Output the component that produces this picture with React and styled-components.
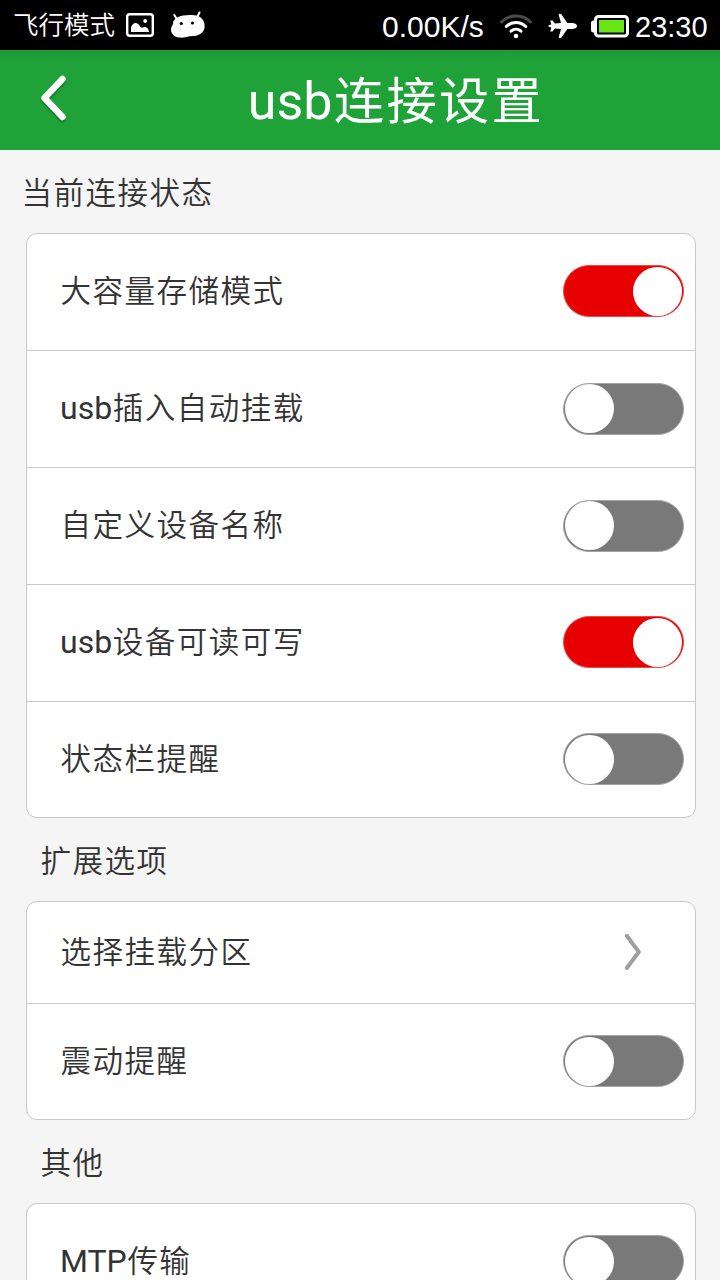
import React, { useState } from "react";
import styled, { createGlobalStyle } from "styled-components";

const sections = [
  {
    title: "当前连接状态",
    indent: 21,
    rows: [
      { id: "storage", label: "大容量存储模式", on: true },
      { id: "automount", label: "usb插入自动挂载" },
      { id: "name", label: "自定义设备名称" },
      { id: "writable", label: "usb设备可读可写", on: true },
      { id: "statusbar", label: "状态栏提醒" },
    ],
  },
  {
    title: "扩展选项",
    indent: 40,
    rows: [
      { id: "partition", label: "选择挂载分区", link: true },
      { id: "vibrate", label: "震动提醒" },
    ],
  },
  {
    title: "其他",
    indent: 40,
    rows: [{ id: "mtp", label: "MTP传输" }],
  },
];

const PictureIcon = () => (
  <PictureSvg viewBox="0 0 28 24">
    <rect x="1.2" y="1.2" width="25.6" height="21.6" rx="2.6" fill="none" stroke="#fff" strokeWidth="2.4" />
    <path d="M5 19v-5c1.500-2.500 2.500-4 4.500-4 2 0 3.500 1.500 5 4 1.500 1.500 3 0 4.500 0 2 0 4 2.500 4 5z" fill="#fff" />
    <circle cx="19.200" cy="8" r="2" fill="#fff" />
  </PictureSvg>
);

const DroidIcon = () => (
  <DroidSvg viewBox="0 0 36 28">
    <path d="M4.300 4l3 5M29.500 1.500l-2.500 5" stroke="#fff" strokeWidth="2" strokeLinecap="round" />
    <path
      d="M3.500 10C5.500 7 9 5 13 4.500c5-.8 11-.8 15 .5 4.500 1.800 7 6 6.600 11-.4 5-4.600 8.500-10.600 9-2.500.2-4 0-6 .6-2.500 1-5 1.300-8.500 1C4 26.300.8 22.500 1 18c.2-2.500 1.500-3.500 2-5 .2-1 0-2 .5-3z"
      fill="#fff"
    />
    <circle cx="11.300" cy="12.500" r="1.600" fill="#000" />
    <circle cx="22.500" cy="12" r="1.600" fill="#000" />
  </DroidSvg>
);

const WifiIcon = () => (
  <WifiSvg viewBox="0 0 32 25" fill="none" strokeLinecap="round">
    <path d="M1.500 8C9 0 23 0 30.500 8" stroke="#4a4a4a" strokeWidth="3" />
    <path d="M6.300 12.500c5.500-5.300 13.900-5.300 19.400 0" stroke="#fff" strokeWidth="3" />
    <path d="M11 17.200c3-2.700 7-2.700 10 0" stroke="#fff" strokeWidth="3" />
    <circle cx="16" cy="22" r="2.300" fill="#fff" />
  </WifiSvg>
);

const PlaneIcon = () => (
  <PlaneSvg viewBox="0 0 30 26">
    <path
      d="M29 13c0 1.800-2.500 3-5.500 3h-4.200L13.500 24.500c-1 1.200-3 .8-2.700-.7L13 16l-6-.5L4.500 18.500H2.300l1-4L.6 13.700v-1.400l2.700-.8-1-4h2.200L7 10.500l6-.5-2.200-7.800c-.3-1.500 1.700-1.900 2.700-.7L19.300 10h4.200c3 0 5.500 1.200 5.500 3z"
      fill="#fff"
    />
  </PlaneSvg>
);

const BatteryIcon = () => (
  <BatterySvg viewBox="0 0 38 23">
    <rect x="0" y="5.500" width="6" height="12" rx="2.500" fill="#fff" />
    <rect x="4.500" y="1.500" width="32" height="19.500" rx="3" fill="#000" stroke="#fff" strokeWidth="3" />
    <rect x="8" y="5" width="25" height="12.500" fill="#68e614" />
  </BatterySvg>
);

// Han characters are set a little smaller than the Latin ones, on a full em pitch
const MixedText = ({ children }) =>
  children
    .split(/([\x20-\x7e]+)/)
    .filter(Boolean)
    .map((part, i) => (/^[\x20-\x7e]/.test(part) ? part : <Han key={i}>{part}</Han>));

const SettingRow = ({ row }) => {
  const [on, setOn] = useState(!!row.on);
  return (
    <Row $short={row.link}>
      <Label>
        <MixedText>{row.label}</MixedText>
      </Label>
      {row.link ? (
        <ArrowSvg viewBox="0 0 18 38">
          <path d="M2.800 2.800L14.800 19 2.800 35" />
        </ArrowSvg>
      ) : (
        <Toggle role="switch" aria-checked={on} $on={on} onClick={() => setOn(!on)}>
          <Knob />
        </Toggle>
      )}
    </Row>
  );
};

const App = () => {
  return (
    <Screen>
      <GlobalStyle />
      <StatusBar>
        <StatusText>飞行模式</StatusText>
        <PictureIcon />
        <DroidIcon />
        <Speed>0.00K/s</Speed>
        <WifiIcon />
        <PlaneIcon />
        <BatteryIcon />
        <Clock>23:30</Clock>
      </StatusBar>
      <Header>
        <BackButton>
          <BackSvg viewBox="0 0 30 48">
            <path d="M24.500 6L6.500 25 24.500 44" />
          </BackSvg>
        </BackButton>
        <Title>
          <MixedText>usb连接设置</MixedText>
        </Title>
      </Header>
      {sections.map((section) => (
        <section key={section.title}>
          <SectionTitle $indent={section.indent}>
            <MixedText>{section.title}</MixedText>
          </SectionTitle>
          <Card>
            {section.rows.map((row) => (
              <SettingRow key={row.id} row={row} />
            ))}
          </Card>
        </section>
      ))}
    </Screen>
  );
};

const GlobalStyle = createGlobalStyle`
  * {
    box-sizing: border-box;
  }
  body {
    margin: 0;
    background: #f5f5f5;
    font-family: Roboto, "Noto Sans CJK SC", sans-serif;
    color: #333;
  }
`;

const Screen = styled.main`
  width: 720px;
  height: 1280px;
  overflow: hidden;
  background: #f5f5f5;
`;

const StatusBar = styled.div`
  display: flex;
  align-items: center;
  height: 50px;
  padding-left: 13px;
  background: #000;
  color: #fff;
  font-family: "Liberation Sans", "Noto Sans CJK SC", sans-serif;
  white-space: nowrap;
  svg {
    flex: none;
  }
`;

const StatusText = styled.span`
  width: 113px;
  font-size: 25.5px;
  font-weight: 350;
  line-height: 50px;
`;

const Speed = styled.span`
  width: 118px;
  margin-left: 176px;
  padding-top: 3px;
  font-size: 30px;
`;

const Clock = styled.span`
  margin-left: 6px;
  padding-top: 4px;
  font-size: 29px;
`;

const PictureSvg = styled.svg`
  width: 28px;
  height: 24px;
`;

const DroidSvg = styled.svg`
  width: 36px;
  height: 28px;
  margin-left: 16px;
`;

const WifiSvg = styled.svg`
  width: 32px;
  height: 25px;
  margin-top: 2px;
`;

const PlaneSvg = styled.svg`
  width: 30px;
  height: 26px;
  margin: 2px 0 0 16px;
`;

const BatterySvg = styled.svg`
  width: 38px;
  height: 23px;
  margin: 3px 0 0 13px;
`;

const Header = styled.header`
  display: flex;
  height: 100px;
  background: linear-gradient(#1e9a36, #1fa338 12px);
`;

const BackButton = styled.button`
  width: 68px;
  padding: 0 0 6px 38px;
  border: 0;
  background: none;
`;

const BackSvg = styled.svg`
  display: block;
  width: 30px;
  height: 48px;
  fill: none;
  stroke: #fff;
  stroke-width: 6.5px;
  stroke-linecap: round;
  stroke-linejoin: round;
  filter: drop-shadow(0 2px 1px rgba(0, 0, 0, 0.3));
`;

const Han = styled.span`
  margin-left: 0.02em;
  font-size: 0.955em;
  font-weight: 350;
  letter-spacing: 0.047em;
`;

const Title = styled.h1`
  flex: 1;
  margin: 0;
  padding-left: 4px;
  color: #fff;
  font-size: 52px;
  font-weight: 400;
  line-height: 104px;
  text-align: center;
  ${Han} {
    margin-left: 0.03em;
    font-size: 0.965em;
    font-weight: 400;
  }
`;

const SectionTitle = styled.h2`
  height: 83px;
  margin: 0;
  padding-left: ${({ $indent }) => $indent}px;
  font-size: 32px;
  font-weight: 400;
  line-height: 86px;
`;

const Card = styled.div`
  width: 670px;
  margin: 0 0 0 26px;
  border: 1px solid #c8c8c8;
  border-radius: 11px;
  background: #fff;
`;

const Row = styled.div`
  display: flex;
  align-items: center;
  justify-content: space-between;
  height: ${({ $short }) => ($short ? 102 : 117)}px;
  padding: 0 11px 2px 33px;
  border-bottom: 1px solid #c8c8c8;
  &:last-child {
    height: 115px;
    border-bottom: 0;
  }
`;

const Label = styled.span`
  padding-top: 1px;
  font-size: 32px;
  line-height: 46px;
`;

const Toggle = styled.button`
  display: flex;
  justify-content: ${({ $on }) => ($on ? "flex-end" : "flex-start")};
  width: 121px;
  height: 52px;
  margin-top: ${({ $on }) => ($on ? 0 : 1)}px;
  padding: 0.5px 1px;
  border: 1px solid ${({ $on }) => ($on ? "#f04848" : "#a4a4a4")};
  border-radius: 26px;
  background: ${({ $on }) => ($on ? "#e60000" : "#797979")};
`;

const Knob = styled.span`
  width: 49px;
  height: 49px;
  border-radius: 50%;
  background: #fff;
`;

const ArrowSvg = styled.svg`
  width: 18px;
  height: 38px;
  margin-right: 42px;
  fill: none;
  stroke: #a0a0a0;
  stroke-width: 4px;
  stroke-linecap: round;
  stroke-linejoin: round;
`;

export default App;
